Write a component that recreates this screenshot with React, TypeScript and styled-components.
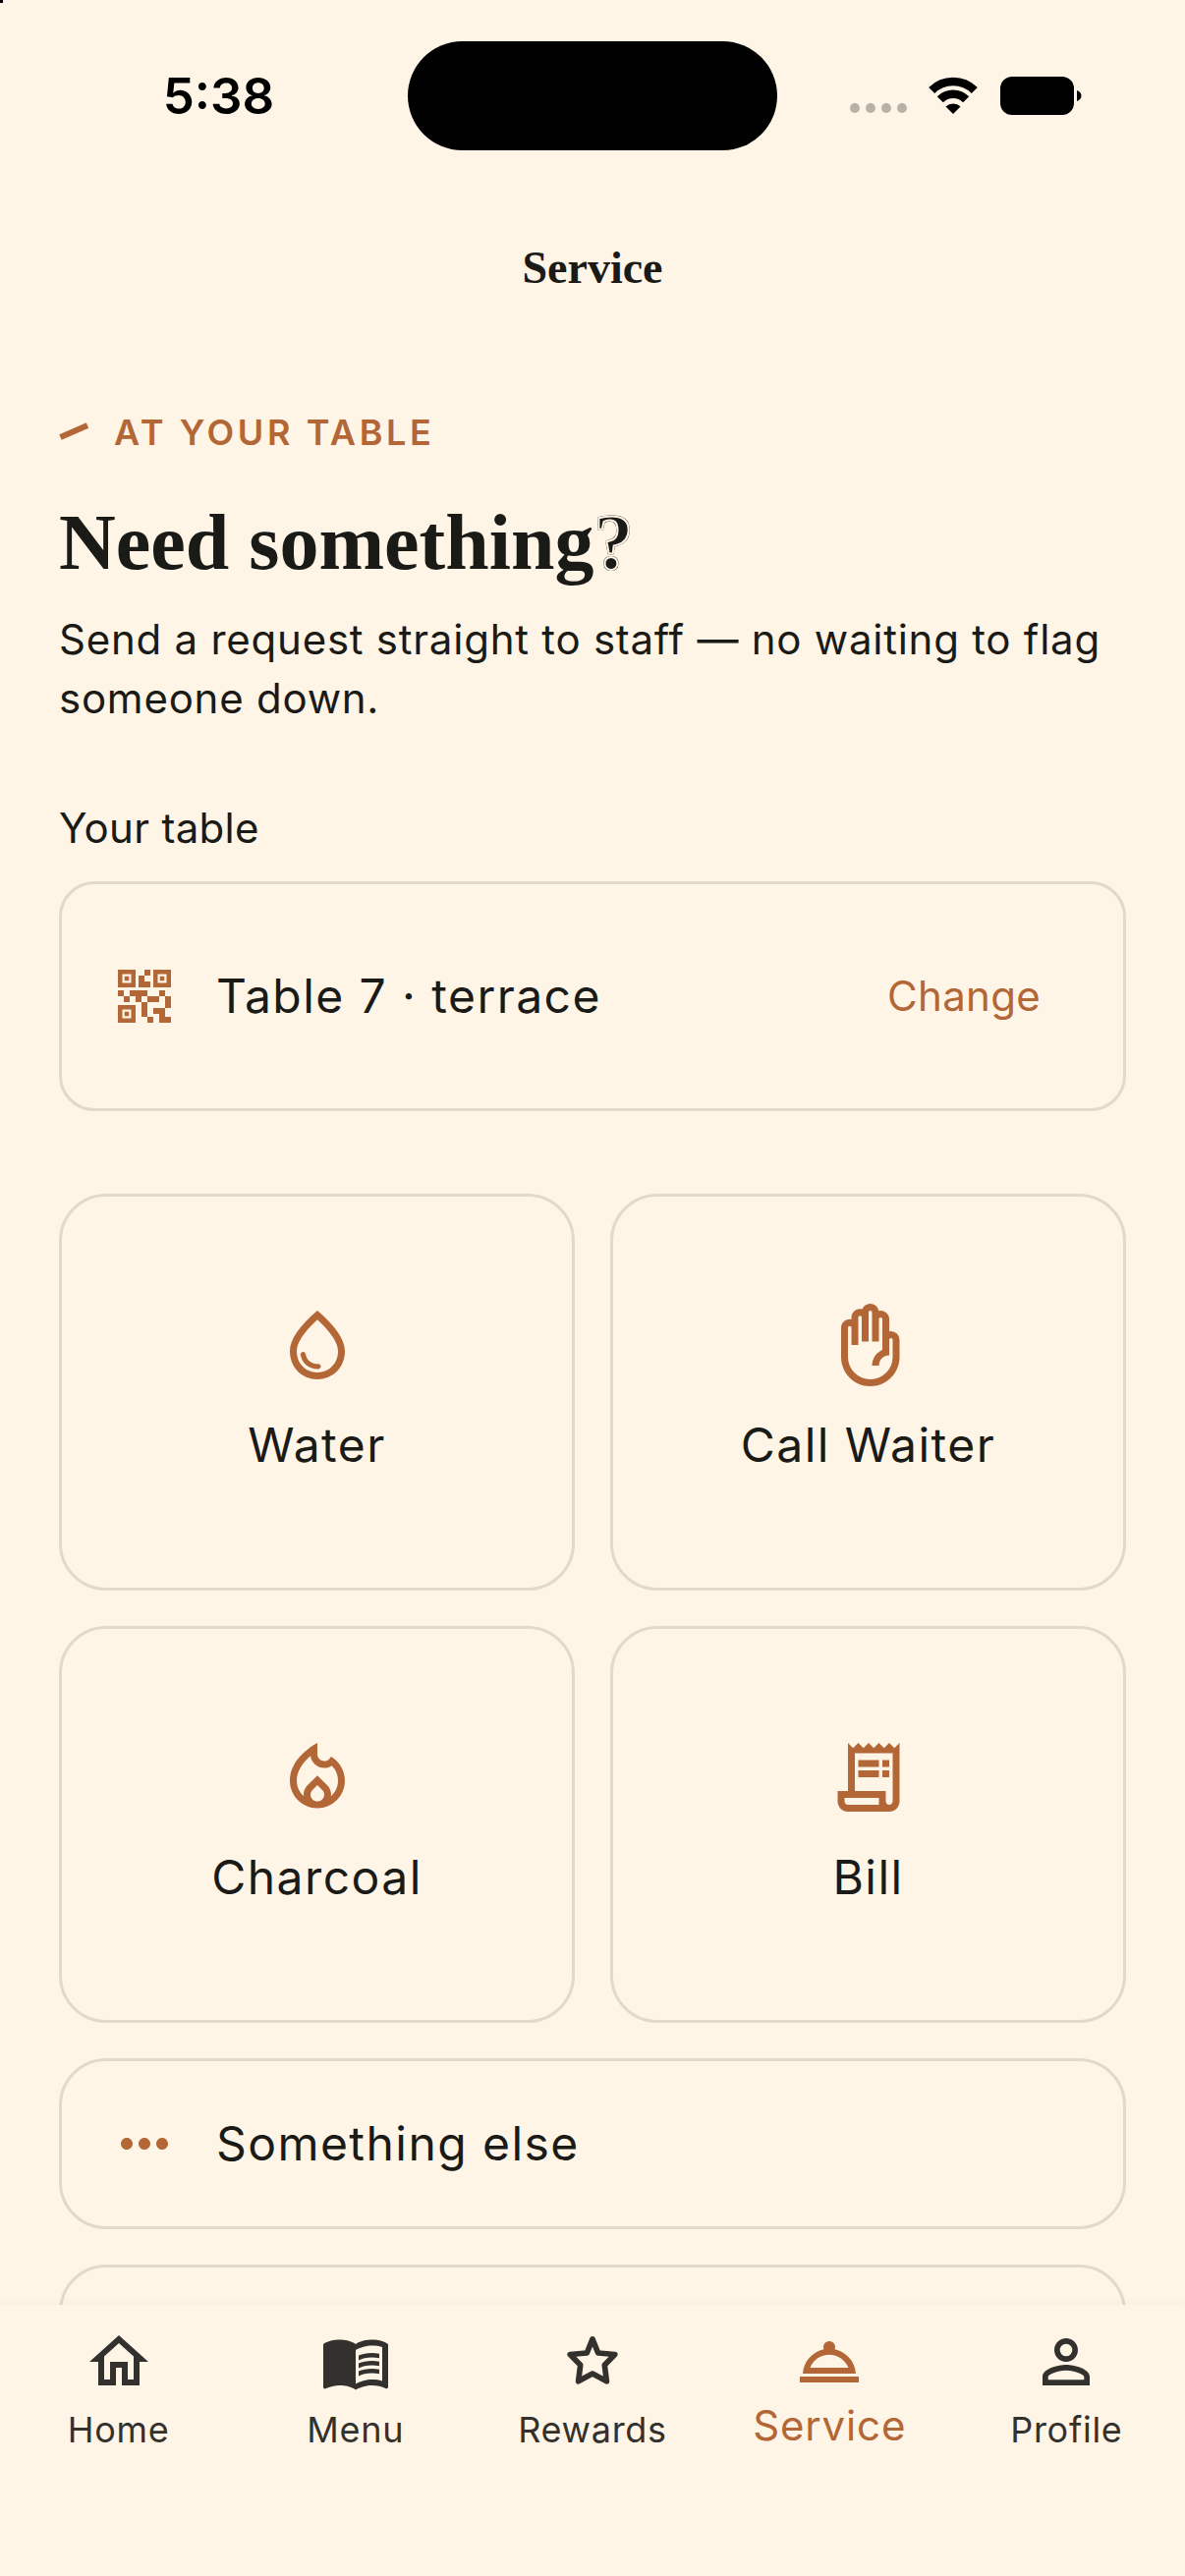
import React from "react";
import styled, { createGlobalStyle } from "styled-components";
import {
  MdMenuBook,
  MdMoreHoriz,
  MdOutlineFrontHand,
  MdOutlineHome,
  MdOutlineLocalFireDepartment,
  MdOutlineReceiptLong,
  MdOutlineRoomService,
  MdOutlineWaterDrop,
  MdPersonOutline,
  MdQrCode2,
} from "react-icons/md";

const color = {
  paper: "#fff5e6",
  ink: "#1a1a17",
  muted: "#33312e",
  accent: "#b36636",
  line: "#e0d9cc",
};

const sans = `Inter, "Liberation Sans", sans-serif`;
const serif = `"Liberation Serif", serif`;

const GlobalStyle = createGlobalStyle`
  * { box-sizing: border-box; }
  body { margin: 0; background: ${color.paper}; }
  h1, h2, p { margin: 0; }
  svg { display: block; flex: none; }
`;

const Screen = styled.div`
  position: relative;
  display: flex;
  flex-direction: column;
  height: 100vh;
  background: ${color.paper};
  color: ${color.ink};
  font-family: ${sans};
`;

const CornerMark = styled.span`
  position: absolute;
  top: 0;
  left: 0;
  width: 3px;
  height: 3px;
  background: #000;
`;

const StatusBar = styled.div`
  display: grid;
  grid-template-columns: 1fr 376px 1fr;
  align-items: center;
  flex: none;
  height: 186px;
  padding-top: 8px;
  color: #000;
`;

const Clock = styled.time`
  justify-self: center;
  padding: 2px 0 0 30px;
  font-size: 51px;
  font-weight: 600;
  line-height: 60px;
`;

const Island = styled.div`
  height: 111px;
  border-radius: 56px;
  background: #000;
`;

const StatusIcons = styled.div`
  display: flex;
  align-items: center;
  gap: 22px;
  padding-left: 74px;
`;

const Header = styled.header`
  display: grid;
  place-items: center;
  flex: none;
  height: 168px;
  padding-top: 6px;
`;

const HeaderTitle = styled.h1`
  font-family: ${serif};
  font-size: 46px;
  font-weight: 700;
  line-height: 60px;
`;

const Content = styled.main`
  flex: 1;
  min-height: 0;
  padding: 60px 60px 0;
  overflow: hidden auto;
  scrollbar-width: none;
`;

const Eyebrow = styled.p`
  display: flex;
  align-items: center;
  gap: 25px;
  color: ${color.accent};
  font-size: 36px;
  font-weight: 600;
  line-height: 52px;
  letter-spacing: 0.1em;
`;

const Heading = styled.h2`
  margin-top: 32px;
  font-family: ${serif};
  font-size: 80px;
  font-weight: 700;
  line-height: 108px;
`;

const OutlinedMark = styled.span`
  color: ${color.ink};
  -webkit-text-stroke: 2px ${color.paper};
  text-shadow: 1px 1px ${color.ink}, -1px -1px ${color.ink}, 1px -1px ${color.ink}, -1px 1px ${color.ink};
`;

const Lead = styled.p`
  margin-top: 15px;
  font-size: 42px;
  line-height: 60px;
  letter-spacing: 0.018em;
`;

const FieldLabel = styled.p`
  margin-top: 72px;
  font-size: 42px;
  line-height: 60px;
  letter-spacing: 0.007em;
`;

const Card = styled.div`
  display: flex;
  align-items: center;
  gap: 37px;
  width: 100%;
  min-height: 174px;
  padding: 48px;
  border: 3px solid ${color.line};
  border-radius: 48px;
  background: none;
  color: inherit;
  font-family: inherit;
  font-size: 48px;
  line-height: 72px;
  letter-spacing: 0.03em;
  text-align: left;

  > svg {
    width: 72px;
    height: 72px;
    color: ${color.accent};
  }
`;

const TableCard = styled(Card)`
  margin-top: 24px;
  border-radius: 36px;
`;

const TableName = styled.span`
  flex: 1;
`;

const ChangeButton = styled.button`
  height: 132px;
  padding: 0 36px;
  border: 0;
  background: none;
  color: ${color.accent};
  font-family: inherit;
  font-size: 42px;
  line-height: 60px;
  letter-spacing: 0.007em;
  cursor: pointer;
`;

const Requests = styled.section`
  display: grid;
  grid-template-columns: 1fr 1fr;
  gap: 36px;
  margin-top: 84px;
`;

const Tile = styled.button`
  display: flex;
  flex-direction: column;
  align-items: center;
  justify-content: center;
  gap: 24px;
  aspect-ratio: 13 / 10;
  padding: 0;
  border: 3px solid ${color.line};
  border-radius: 48px;
  background: none;
  color: inherit;
  font-family: inherit;
  font-size: 48px;
  line-height: 72px;
  letter-spacing: 0.03em;
  cursor: pointer;

  svg {
    width: 84px;
    height: 84px;
    color: ${color.accent};
  }
`;

const WideRow = styled(Card)`
  grid-column: 1 / -1;
`;

const NavBar = styled.nav`
  position: relative;
  display: grid;
  grid-template-columns: repeat(5, 1fr);
  flex: none;
  height: 276px;
  padding-top: 22px;
  background: ${color.paper};
  box-shadow: 0 -2px 10px rgba(60, 40, 10, 0.03);
`;

const NavItem = styled.a<{ $active?: boolean }>`
  display: flex;
  flex-direction: column;
  align-items: center;
  color: ${(p) => (p.$active ? color.accent : color.muted)};
  font-size: ${(p) => (p.$active ? 42 : 36)}px;
  line-height: ${(p) => (p.$active ? 58 : 66)}px;
  letter-spacing: 0.02em;
  text-decoration: none;

  svg {
    width: 72px;
    height: 72px;
  }
`;

const Signal = () => (
  <svg width="58" height="39" viewBox="0 0 58 39" fill="#b8b1a6">
    <circle cx="5" cy="32" r="5" />
    <circle cx="21" cy="32" r="5" />
    <circle cx="37" cy="32" r="5" />
    <circle cx="53" cy="32" r="5" />
  </svg>
);

const Wifi = () => (
  <svg width="51" height="39" viewBox="0 0 51 39" fill="none" stroke="#000" strokeWidth="8.5">
    <path d="M3.200 14a31 31 0 0 1 43.600 0" />
    <path d="M11.800 23.200a18.500 18.500 0 0 1 26.400 0" />
    <path d="M25 38l-7.500-7.600a11 11 0 0 1 15 0z" fill="#000" stroke="none" />
  </svg>
);

const Battery = () => (
  <svg width="83" height="39" viewBox="0 0 83 39">
    <rect width="75" height="39" rx="12" />
    <path d="M78 14c6 2 6 9 0 11z" />
  </svg>
);

const Slash = () => (
  <svg width="31" height="20" viewBox="0 0 31 20" stroke={color.accent} strokeWidth="6">
    <path d="M1.500 15L29 3" />
  </svg>
);

const RoundedStar = () => (
  <svg viewBox="0 0 24 24" fill="none" stroke="currentColor" strokeWidth="1.9" strokeLinejoin="round">
    <path d="M12 4.300L13.900 9l5.700.5-3.500 3.600.7 5.500L12 16l-4.800 2.600.7-5.500L4.400 9.500l5.700-.5z" />
  </svg>
);

const requests = [
  { label: "Water", Icon: MdOutlineWaterDrop },
  { label: "Call Waiter", Icon: MdOutlineFrontHand },
  { label: "Charcoal", Icon: MdOutlineLocalFireDepartment },
  { label: "Bill", Icon: MdOutlineReceiptLong },
];

const tabs = [
  { label: "Home", Icon: MdOutlineHome },
  { label: "Menu", Icon: MdMenuBook },
  { label: "Rewards", Icon: RoundedStar },
  { label: "Service", Icon: MdOutlineRoomService, active: true },
  { label: "Profile", Icon: MdPersonOutline },
];

export default function App() {
  return (
    <Screen>
      <GlobalStyle />
      <CornerMark />
      <StatusBar>
        <Clock>5:38</Clock>
        <Island />
        <StatusIcons>
          <Signal />
          <Wifi />
          <Battery />
        </StatusIcons>
      </StatusBar>
      <Header>
        <HeaderTitle>Service</HeaderTitle>
      </Header>
      <Content>
        <Eyebrow>
          <Slash />
          AT YOUR TABLE
        </Eyebrow>
        <Heading>
          Need something<OutlinedMark>?</OutlinedMark>
        </Heading>
        <Lead>Send a request straight to staff — no waiting to flag someone down.</Lead>
        <FieldLabel>Your table</FieldLabel>
        <TableCard>
          <MdQrCode2 />
          <TableName>Table 7 · terrace</TableName>
          <ChangeButton type="button">Change</ChangeButton>
        </TableCard>
        <Requests>
          {requests.map(({ label, Icon }) => (
            <Tile key={label} type="button">
              <Icon />
              {label}
            </Tile>
          ))}
          <WideRow as="button" type="button">
            <MdMoreHoriz />
            Something else
          </WideRow>
          <WideRow />
        </Requests>
      </Content>
      <NavBar>
        {tabs.map(({ label, Icon, active }) => (
          <NavItem key={label} href="#" $active={active}>
            <Icon />
            {label}
          </NavItem>
        ))}
      </NavBar>
    </Screen>
  );
}
